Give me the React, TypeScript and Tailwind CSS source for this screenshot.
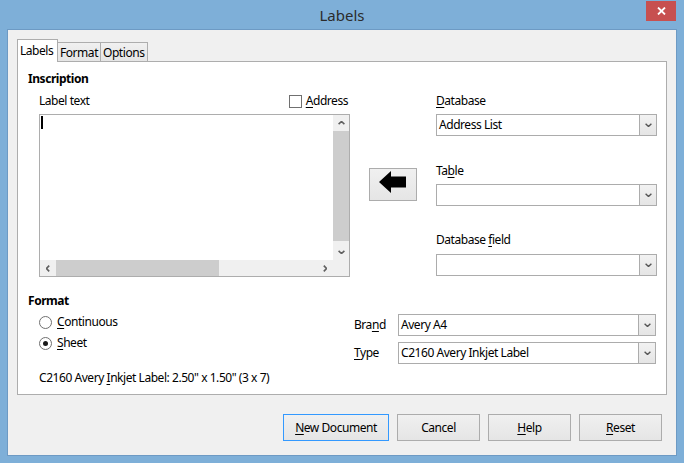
import React from "react";

function Chev({ dir, color = "#606060", w = 1.6 }: { dir: "up" | "down" | "left" | "right"; color?: string; w?: number }) {
  if (dir === "up" || dir === "down") {
    const d = dir === "down" ? "M0.6 0.8 L3.5 3.5 L6.4 0.8" : "M0.6 3.2 L3.5 0.5 L6.4 3.2";
    return (
      <svg width="7" height="4" viewBox="0 0 7 4">
        <path d={d} stroke={color} strokeWidth={w} fill="none" />
      </svg>
    );
  }
  const p = dir === "left" ? "M3.2 0.6 L0.5 3.5 L3.2 6.4" : "M0.8 0.6 L3.5 3.5 L0.8 6.4";
  return (
    <svg width="4" height="7" viewBox="0 0 4 7">
      <path d={p} stroke={color} strokeWidth={w} fill="none" />
    </svg>
  );
}

function Combo({ value, w }: { value?: string; w: string }) {
  return (
    <div className={`flex h-[22px] border border-[#acacac] bg-white ${w}`}>
      <div className="flex-1 pl-[2px] leading-[20px] text-black whitespace-nowrap overflow-hidden">{value}</div>
      <div className="w-[17px] flex items-center justify-center border-l border-[#acacac] bg-linear-to-b from-[#f2f2f2] to-[#e5e5e5]">
        <Chev dir="down" color="#555555" w={1.4} />
      </div>
    </div>
  );
}

function Btn({ children, w, def }: { children: React.ReactNode; w: string; def?: boolean }) {
  return (
    <div
      className={`h-[27px] ${w} flex items-center justify-center border ${
        def ? "border-[#3399ff]" : "border-[#acacac]"
      } bg-linear-to-b from-[#f0f0f0] to-[#e5e5e5] text-black`}
    >
      {children}
    </div>
  );
}

function U({ children }: { children: React.ReactNode }) {
  return <span className="underline decoration-1 underline-offset-[2px]">{children}</span>;
}

export default function App() {
  return (
    <div className="w-[684px] h-[463px] bg-[#7eafd8] flex flex-col font-['Noto_Sans',sans-serif] text-[12px] tracking-[-0.45px] text-black overflow-hidden">
      {/* Title bar */}
      <div className="h-[29px] relative flex items-center justify-center">
        <span className="text-[15px] tracking-normal text-[#2b2b2b] mt-[2px]">Labels</span>
        <div className="absolute right-[8px] top-[1px] w-[30px] h-[20px] bg-[#c75050] flex items-center justify-center">
          <svg width="9" height="8" viewBox="0 0 9 8">
            <path d="M1 0.5 L8 7.5 M8 0.5 L1 7.5" stroke="white" strokeWidth="1.8" />
          </svg>
        </div>
      </div>

      {/* Client area */}
      <div className="mx-[7px] h-[427px] border border-[#6d9ac4] bg-[#f0f0f0] flex flex-col">
        {/* Tab control */}
        <div className="ml-[9px] mt-[9px] w-[650px] flex flex-col">
          <div className="h-[22px] flex items-end">
            <div className="relative z-10 -mb-px h-[23px] w-[41px] bg-white border-l border-t border-r border-[#adadad] pl-[2px] leading-[22px]">
              Labels
            </div>
            <div className="h-[19px] w-[43px] border-t border-r border-[#adadad] bg-linear-to-b from-[#f0f0f0] to-[#e5e5e5] pl-[2px] leading-[19px]">
              Format
            </div>
            <div className="h-[19px] w-[47px] border-t border-r border-[#adadad] bg-linear-to-b from-[#f0f0f0] to-[#e5e5e5] pl-[2px] leading-[19px]">
              Options
            </div>
          </div>

          {/* Panel */}
          <div className="h-[334px] border border-[#adadad] bg-white pl-[10px] pt-[9px] flex flex-col">
            <div className="font-bold leading-[16px]">Inscription</div>

            <div className="mt-[6px] flex items-start">
              {/* Label text column */}
              <div className="ml-[11px] w-[311px] flex flex-col">
                <div className="h-[16px] flex items-center justify-between pr-[2px]">
                  <span className="leading-[16px]">Label text</span>
                  <div className="flex items-center gap-[4px]">
                    <div className="w-[13px] h-[13px] border border-[#707070] bg-white" />
                    <span className="leading-[16px]">
                      <U>A</U>ddress
                    </span>
                  </div>
                </div>
                <div className="mt-[5px] h-[163px] border border-[#adadad] bg-white flex flex-col">
                  <div className="flex-1 flex">
                    <div className="flex-1 pl-[1px] pt-[1px]">
                      <div className="w-[2px] h-[13px] bg-black" />
                    </div>
                    <div className="w-[16px] bg-[#f0f0f0] flex flex-col">
                      <div className="h-[16px] flex items-center justify-center">
                        <Chev dir="up" />
                      </div>
                      <div className="h-[110px] bg-[#cdcdcd]" />
                      <div className="flex-1" />
                      <div className="h-[16px] flex items-center justify-center">
                        <Chev dir="down" />
                      </div>
                    </div>
                  </div>
                  <div className="h-[16px] flex bg-[#f0f0f0]">
                    <div className="w-[16px] flex items-center justify-center">
                      <Chev dir="left" />
                    </div>
                    <div className="w-[163px] bg-[#cdcdcd]" />
                    <div className="flex-1" />
                    <div className="w-[16px] flex items-center justify-center">
                      <Chev dir="right" />
                    </div>
                    <div className="w-[16px]" />
                  </div>
                </div>
              </div>

              {/* Arrow button */}
              <div className="ml-[19px] mt-[75px] w-[48px] h-[33px] border border-[#acacac] bg-linear-to-b from-[#f0f0f0] to-[#e5e5e5] flex justify-center pt-[2px]">
                <svg width="28" height="22" viewBox="0 0 28 22">
                  <polygon points="0,11 12,0 12,5.5 27,5.5 27,16.5 12,16.5 12,22" fill="black" />
                </svg>
              </div>

              {/* Database column */}
              <div className="ml-[19px] w-[221px] flex flex-col">
                <div className="h-[16px] leading-[16px]">
                  <U>D</U>atabase
                </div>
                <div className="mt-[5px]">
                  <Combo value="Address List" w="w-[221px]" />
                </div>
                <div className="mt-[27px] h-[16px] leading-[16px]">
                  Ta<U>b</U>le
                </div>
                <div className="mt-[5px]">
                  <Combo w="w-[221px]" />
                </div>
                <div className="mt-[26px] h-[16px] leading-[16px]">
                  Database <U>f</U>ield
                </div>
                <div className="mt-[6px]">
                  <Combo w="w-[221px]" />
                </div>
              </div>
            </div>

            <div className="mt-[16px] font-bold leading-[16px]">Format</div>

            <div className="mt-[5px] flex items-start">
              <div className="ml-[11px] w-[315px] flex flex-col">
                <div className="h-[16px] flex items-center gap-[5px]">
                  <div className="w-[13px] h-[13px] rounded-full border border-[#707070] bg-white" />
                  <span className="leading-[16px]">
                    <U>C</U>ontinuous
                  </span>
                </div>
                <div className="mt-[5px] h-[16px] flex items-center gap-[5px]">
                  <div className="w-[13px] h-[13px] rounded-full border border-[#707070] bg-white flex items-center justify-center">
                    <div className="w-[5px] h-[5px] rounded-full bg-[#1a1a1a]" />
                  </div>
                  <span className="leading-[16px]">
                    <U>S</U>heet
                  </span>
                </div>
              </div>
              <div className="flex flex-col gap-[6px]">
                <div className="flex h-[22px]">
                  <div className="w-[44px] leading-[22px]">
                    Bra<U>n</U>d
                  </div>
                  <Combo value="Avery A4" w="w-[258px]" />
                </div>
                <div className="flex h-[22px]">
                  <div className="w-[44px] leading-[22px]">
                    <U>T</U>ype
                  </div>
                  <Combo value="C2160 Avery Inkjet Label" w="w-[258px]" />
                </div>
              </div>
            </div>

            <div className="mt-[6px] ml-[11px] leading-[16px]">
              C2160 Avery <U>I</U>nkjet Label: 2.50" x 1.50" (3 x 7)
            </div>
          </div>
        </div>

        {/* Buttons */}
        <div className="mt-[19px] pr-[14px] flex justify-end gap-[8px]">
          <Btn w="w-[106px]" def>
            <span>
              <U>N</U>ew Document
            </span>
          </Btn>
          <Btn w="w-[83px]">Cancel</Btn>
          <Btn w="w-[83px]">
            <span>
              <U>H</U>elp
            </span>
          </Btn>
          <Btn w="w-[83px]">
            <span>
              <U>R</U>eset
            </span>
          </Btn>
        </div>
      </div>
    </div>
  );
}
